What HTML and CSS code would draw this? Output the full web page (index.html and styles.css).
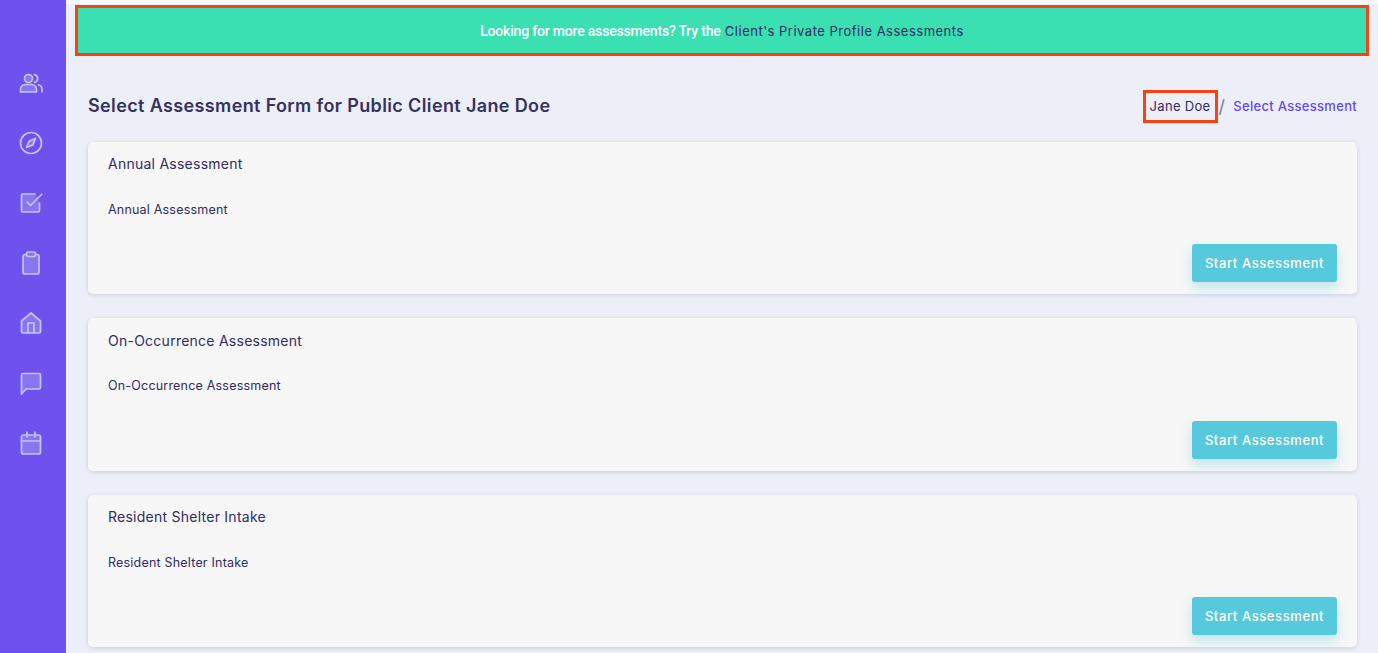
FILE: index.html
```html
<!DOCTYPE html>
<html lang="en">
<head>
<meta charset="utf-8">
<title>Select Assessment</title>
<link rel="stylesheet" href="styles.css">
</head>
<body>
<div class="app">
  <nav class="sidebar">
    <svg class="nav-icon" viewBox="0 0 24 24"><circle class="fill" cx="9.5" cy="7.5" r="4"/><path class="fill" d="M1.5 21v-2.5a5 5 0 0 1 5-5h6a5 5 0 0 1 5 5V21z"/><path d="M15.5 3.600a4 4 0 0 1 0 7.800M19.500 13.800a5 5 0 0 1 3.500 4.700V21"/></svg>
    <svg class="nav-icon" viewBox="0 0 24 24"><circle cx="12" cy="12" r="10.500"/><path class="fill" d="M16.500 7.500l-2.600 6.400-6.400 2.600 2.600-6.400z"/></svg>
    <svg class="nav-icon" viewBox="0 0 24 24"><path class="fill" d="M20.500 12v7.500a1.500 1.500 0 0 1-1.500 1.500h-15a1.500 1.500 0 0 1-1.500-1.500v-15A1.500 1.500 0 0 1 4 3h12"/><path d="M8 11l3.500 3.500L22.500 3.500"/></svg>
    <svg class="nav-icon" viewBox="0 0 24 24"><path class="fill" d="M7.500 3.500H6A2 2 0 0 0 4 5.500V21a2 2 0 0 0 2 2h12a2 2 0 0 0 2-2V5.500a2 2 0 0 0-2-2h-1.500"/><rect class="fill" x="7.500" y="1" width="9" height="4.500" rx="1.500"/></svg>
    <svg class="nav-icon" viewBox="0 0 24 24"><path class="fill" d="M2.500 10L12 2l9.500 8v10.500a1.500 1.500 0 0 1-1.500 1.500H4a1.500 1.500 0 0 1-1.500-1.500z"/><path d="M9 22V12h6v10"/></svg>
    <svg class="nav-icon" viewBox="0 0 24 24"><path class="fill" d="M2.500 23V4a1.500 1.500 0 0 1 1.500-1.500h16A1.500 1.500 0 0 1 21.500 4v12.500A1.500 1.500 0 0 1 20 18H7z"/></svg>
    <svg class="nav-icon" viewBox="0 0 24 24"><rect class="fill" x="2.500" y="4" width="19" height="19" rx="2"/><path d="M2.500 10h19M8 1v5M16 1v5"/></svg>
  </nav>
  <main class="main">
    <div class="banner"><span>Looking for more assessments? Try the </span><a class="banner-link">Client's Private Profile Assessments</a></div>
    <div class="content">
      <header class="page-head">
        <h1 class="page-title">Select Assessment Form for Public Client Jane Doe</h1>
        <div class="crumbs">
          <span class="crumb-box">Jane Doe</span>
          <span class="crumb-sep">/</span>
          <span class="crumb-active">Select Assessment</span>
        </div>
      </header>
      <section class="card">
        <h2 class="card-title">Annual Assessment</h2>
        <p class="card-text">Annual Assessment</p>
        <div class="card-actions"><button class="start-btn">Start Assessment</button></div>
      </section>
      <section class="card">
        <h2 class="card-title">On-Occurrence Assessment</h2>
        <p class="card-text">On-Occurrence Assessment</p>
        <div class="card-actions"><button class="start-btn">Start Assessment</button></div>
      </section>
      <section class="card">
        <h2 class="card-title">Resident Shelter Intake</h2>
        <p class="card-text">Resident Shelter Intake</p>
        <div class="card-actions"><button class="start-btn">Start Assessment</button></div>
      </section>
    </div>
  </main>
</div>
</body>
</html>
```

FILE: styles.css
```css
* { box-sizing: border-box; }
html, body { margin: 0; height: 653px; overflow: hidden; }
body { font-family: "Inter", "Liberation Sans", sans-serif; background: #eceff8; color: #2f2c63; }
.app { display: flex; height: 653px; }
.sidebar { width: 66px; flex: none; background: #6f52ed; display: flex; flex-direction: column; align-items: center; padding: 71px 4px 0 0; gap: 36px; }
.nav-icon { width: 24px; height: 24px; fill: none; stroke: #c5c3f5; stroke-width: 1.7; stroke-linecap: round; stroke-linejoin: round; }
.nav-icon .fill { fill: #8a75f1; }
.main { flex: 1; min-width: 0; border-top: 4px solid #f8f9fc; }
.banner { margin: 1px 9px 0; height: 51px; background: #3adfb2; border: 3px solid #f9420f; display: flex; align-items: center; justify-content: center; white-space: pre; font-family: "Roboto", sans-serif; font-size: 14px; font-weight: 500; letter-spacing: -0.19px; color: #fff; }
.banner-link { margin-left: 1px; font-family: "Inter", sans-serif; font-weight: 400; font-size: 13px; letter-spacing: 0.5px; color: #2f2c63; }
.content { padding: 0 21px 0 22px; }
.page-head { display: flex; justify-content: space-between; align-items: center; height: 34px; margin-top: 33px; margin-bottom: 18.5px; }
.page-title { margin: 0; padding-bottom: 2px; font-size: 18px; font-weight: 600; letter-spacing: 0.37px; color: #35325f; }
.crumbs { display: flex; align-items: center; font-size: 13px; letter-spacing: 0.3px; }
.crumb-box { border: 3px solid #f9420f; height: 33px; width: 75px; display: flex; align-items: center; justify-content: center; margin-right: 1px; color: #2f2c63; }
.crumb-sep { color: #7a78a8; font-size: 18px; margin-right: 8px; }
.crumb-active { color: #6549ee; font-weight: 500; }
.card { height: 152.5px; margin-bottom: 24px; background: #f7f7f7; border-radius: 5px; box-shadow: 0 1px 4px rgba(60, 60, 110, 0.18); padding: 13.5px 20px 12px; display: flex; flex-direction: column; }
.card-title { margin: 0; font-size: 14px; line-height: 17px; font-weight: 400; letter-spacing: 0.25px; color: #2f2c63; }
.card-text { margin: 29.5px 0 0; font-size: 12.5px; line-height: 16px; font-weight: 400; letter-spacing: 0.2px; color: #2f2c63; }
.card-actions { margin-top: auto; display: flex; justify-content: flex-end; }
.start-btn { width: 145px; height: 38px; border: 0; border-radius: 3px; background: #57c9dc; color: #fff; font-family: "Inter", sans-serif; font-size: 13px; font-weight: 500; letter-spacing: 0.6px; box-shadow: 0 6px 12px rgba(87, 201, 220, 0.35); }
```
